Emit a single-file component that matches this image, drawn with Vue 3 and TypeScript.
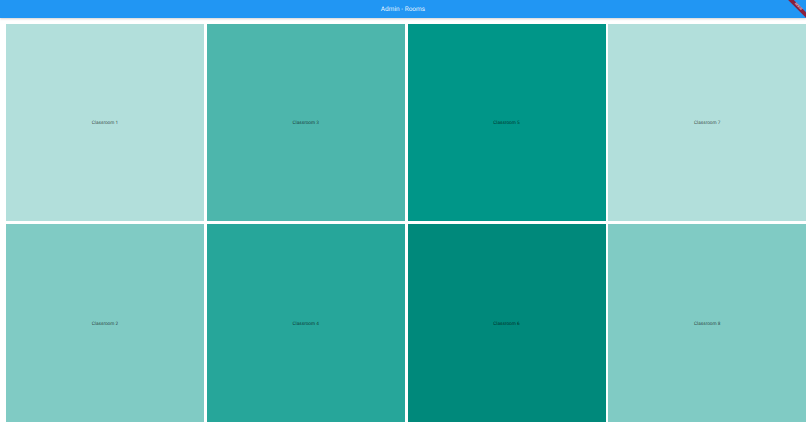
<script setup lang="ts">
interface Room { name: string; color: string }
const rooms: Room[] = [
  { name: 'Classroom 1', color: '#b2dfdb' },
  { name: 'Classroom 2', color: '#80cbc4' },
  { name: 'Classroom 3', color: '#4db6ac' },
  { name: 'Classroom 4', color: '#26a69a' },
  { name: 'Classroom 5', color: '#009688' },
  { name: 'Classroom 6', color: '#00897b' },
  { name: 'Classroom 7', color: '#b2dfdb' },
  { name: 'Classroom 8', color: '#80cbc4' },
]
</script>

<template>
  <div class="page">
    <header class="bar">Admin - Rooms</header>
    <main class="grid">
      <div v-for="r in rooms" :key="r.name" class="room" :style="{ background: r.color }">{{ r.name }}</div>
    </main>
    <div class="banner"><span class="ribbon">DEBUG</span></div>
  </div>
</template>

<style scoped>
.page {
  position: relative;
  width: 806px;
  height: 428px;
  overflow: hidden;
  background: #fff;
  font-family: Roboto, "Liberation Sans", sans-serif;
  text-rendering: geometricPrecision;
}
.bar {
  box-sizing: border-box;
  height: 17.5px;
  padding-top: 1px;
  background: #2196f3;
  color: rgba(255, 255, 255, 0.9);
  font-size: 6.5px;
  line-height: 16.5px;
  text-align: center;
  box-shadow: 0 1px 2px rgba(0, 0, 0, 0.18);
}
.grid {
  display: grid;
  grid-template-columns: repeat(4, 198px);
  grid-template-rows: repeat(2, 197.5px);
  grid-auto-flow: column;
  gap: 3px 2.75px;
  padding: 6px 0 0 6px;
}
.room {
  box-sizing: border-box;
  display: flex;
  align-items: center;
  justify-content: center;
  padding-top: 3px;
  color: rgba(0, 0, 0, 0.72);
  font-size: 4.7px;
}
.banner {
  position: absolute;
  top: 0;
  right: 0;
  width: 20px;
  height: 20px;
  overflow: hidden;
}
.ribbon {
  position: absolute;
  top: 5.2px;
  left: -4.5px;
  width: 32px;
  height: 3.8px;
  line-height: 3.8px;
  transform: rotate(45deg);
  background: #8a1f3c;
  color: #e8c8d0;
  font-size: 2.8px;
  font-weight: 700;
  text-align: center;
}
</style>
